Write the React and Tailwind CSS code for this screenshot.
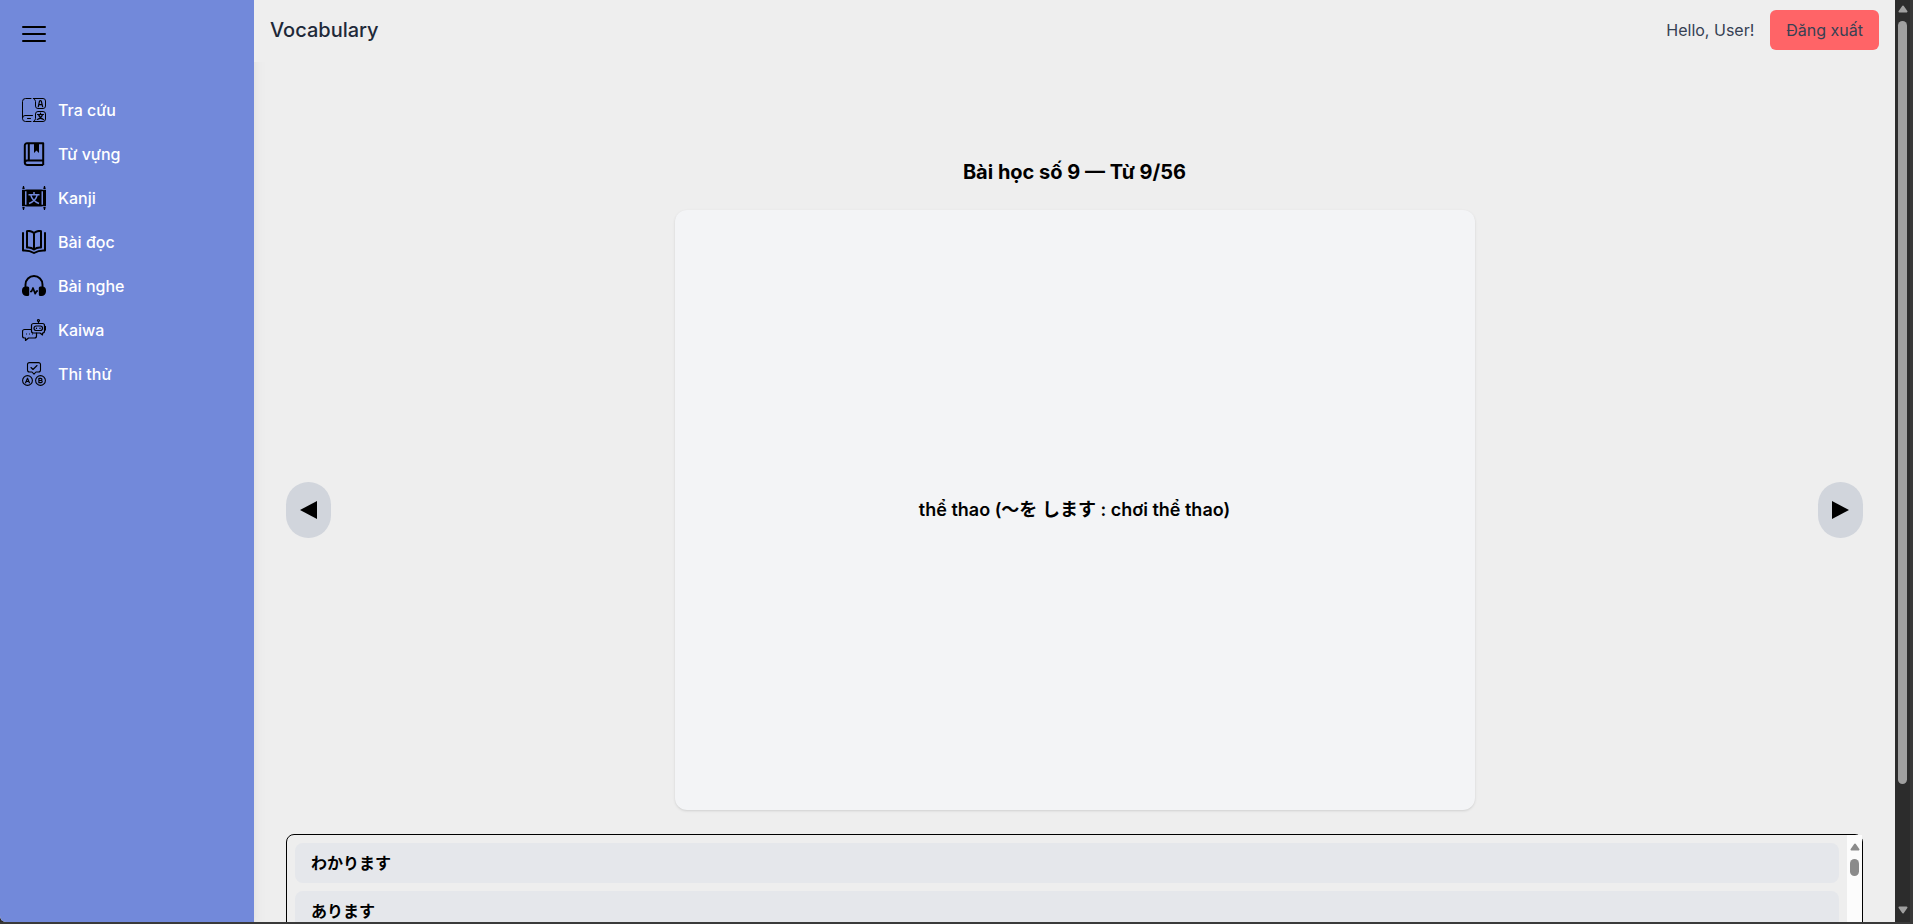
import React from "react";

const LookupIcon = () => (
  <svg viewBox="0 0 24 24" className="size-6 shrink-0" fill="none" stroke="black" strokeWidth="1" strokeLinecap="round" strokeLinejoin="round" aria-hidden="true">
    <path d="M9 .5H3.500a3 3 0 0 0-3 3v17a3 3 0 0 0 3 3H9M.5 20a2.500 2.500 0 0 1 2.500-2.500H10.500M5.500 20.500H8.500" />
    <path d="M11.500.5H21a2.500 2.500 0 0 1 2.500 2.500v5a2.500 2.500 0 0 1-2.500 2.500h-5a2.500 2.500 0 0 1-2.500-2.500V3.500Q13.500 1.500 11.500.5Z" />
    <path d="M11.500 23.500H21a2.500 2.500 0 0 0 2.500-2.500v-5a2.500 2.500 0 0 0-2.500-2.500h-5a2.500 2.500 0 0 0-2.500 2.500V20.500Q13.500 22.500 11.500 23.500Z" />
    <path d="M16.300 8.700L17.500 3.200Q18.400 1.900 19.300 3.200L20.600 8.700M17 6.700H20" strokeWidth="1.200" />
    <path d="M15.500 16.500H21.500M18.500 15V16.500M16.500 16.500Q17.500 20 21.500 21.500M20.500 16.500Q19.500 20 15.300 21.500" strokeWidth="1.200" />
  </svg>
);

const BookmarkIcon = () => (
  <svg viewBox="0 0 24 24" className="size-6 shrink-0" aria-hidden="true">
    <path d="M21.200 18.500V1.200H5a2.200 2.200 0 0 0-2.200 2.200V20.800A2.200 2.200 0 0 0 5 22.900H21.200M2.800 20.800A2.200 2.200 0 0 1 5 18.600H21.200V22.900M6.800 1.200V18.600" fill="none" stroke="black" strokeWidth="2" strokeLinejoin="round" />
    <path d="M12 1h5v10l-2.500-2.500L12 11Z" fill="black" />
  </svg>
);

const KanjiIcon = () => (
  <svg viewBox="0 0 24 24" className="size-6 shrink-0" aria-hidden="true">
    <path d="M1 0h1l.8 3.200H.2ZM22 0h1l.8 3.200h-2.600ZM0 4h3v16H0ZM21 4h3v16h-3ZM.2 20.800h2.600L2 24H1ZM21.200 20.800h2.600L23 24h-1ZM4.500 3.500h15v17h-15Z" fill="black" />
    <path d="M3 4.500h2M3 19.500h2M19 4.500h2M19 19.500h2" stroke="black" strokeWidth="1.500" />
    <path d="M6.500 8.700h11M12 6v2.700M8.700 8.700Q10 15 17 17.500M15.300 8.700Q14 15 7 17.500" fill="none" stroke="#7289da" strokeWidth="1.500" />
  </svg>
);

const ReadingIcon = () => (
  <svg viewBox="0 0 24 24" className="size-6 shrink-0" fill="none" stroke="black" strokeWidth="2" strokeLinejoin="round" strokeLinecap="round" aria-hidden="true">
    <path d="M12 3Q8.500.2 5 1.200V17.500Q9 17 12 19.500Q15 17 19 17.500V1.200Q15.500.2 12 3ZM12 3V19.500" />
    <path d="M1 3V20.500Q7 20 12 23Q17 20 23 20.500V3" />
  </svg>
);

const ListeningIcon = () => (
  <svg viewBox="0 0 24 24" className="size-6 shrink-0" aria-hidden="true">
    <path d="M3.500 14V10.500a8.500 8.500 0 0 1 17 0V14" fill="none" stroke="black" strokeWidth="1.900" />
    <path d="M4 12.500H5.700A1.500 1.500 0 0 1 7.200 14V20.500A1.500 1.500 0 0 1 5.700 22H4.500A4.500 4.500 0 0 1 0 17.500V16.500a4 4 0 0 1 4-4ZM20 12.500H18.300A1.500 1.500 0 0 0 16.800 14V20.500A1.500 1.500 0 0 0 18.300 22H19.500A4.500 4.500 0 0 0 24 17.500V16.500a4 4 0 0 0-4-4Z" fill="black" />
    <path d="M8 17.500h1.500L11 14l2.200 5.700L14.700 17H16" fill="none" stroke="black" strokeWidth="1.700" strokeLinejoin="round" />
  </svg>
);

const SpeakingIcon = () => (
  <svg viewBox="0 0 24 24" className="size-6 shrink-0" fill="none" stroke="black" strokeWidth="1.200" strokeLinecap="round" strokeLinejoin="round" aria-hidden="true">
    <circle cx="16.500" cy="2.500" r="1" />
    <path d="M16.500 3.500V5.500M11.500 5.500H20.500a2 2 0 0 1 2 2V13a2 2 0 0 1-2 2V17L18 15H11.500a2 2 0 0 1-2-2V7.500a2 2 0 0 1 2-2ZM22.500 8.500h1V12h-1" />
    <rect x="12" y="8" width="8.500" height="4.500" rx="2.200" />
    <path d="M14.500 10v.4M18 10v.4" />
    <path d="M9.500 11.500H2.500a2 2 0 0 0-2 2V18a2 2 0 0 0 2 2H3.500V22.500L6.500 20H12.500a2 2 0 0 0 2-2V15" />
    <path d="M4.500 16h.1M7.500 16h.1M10.500 16h.1" strokeWidth="1" />
  </svg>
);

const ExamIcon = () => (
  <svg viewBox="0 0 24 24" className="size-6 shrink-0" fill="none" stroke="black" strokeWidth="1.100" strokeLinecap="round" strokeLinejoin="round" aria-hidden="true">
    <path d="M7.500.6H16.500a2 2 0 0 1 2 2V8a2 2 0 0 1-2 2H14L12 12.200 10 10H7.500a2 2 0 0 1-2-2V2.600a2 2 0 0 1 2-2Z" />
    <path d="M9 5.500l2 2 4-4" />
    <circle cx="5.500" cy="18.500" r="4.900" />
    <circle cx="18.500" cy="18.500" r="4.900" />
    <path d="M3.600 20.800L5.500 16.200L7.400 20.800M4.400 19.500h2.200" strokeWidth="1.200" />
    <path d="M16.900 16.300h1.900a1.100 1.100 0 0 1 0 2.200H16.900h2.200a1.100 1.100 0 0 1 0 2.200H16.900Z" strokeWidth="1.200" />
  </svg>
);

const Triangle = ({ points, className }) => (
  <svg viewBox="0 0 10 8" className={className} aria-hidden="true">
    <polygon points={points} fill="currentColor" stroke="currentColor" strokeWidth="2" strokeLinejoin="round" />
  </svg>
);
const UP = "5,1.500 8.500,6.500 1.500,6.500";
const DOWN = "5,6.500 8.500,1.500 1.500,1.500";

const menu = [
  { label: "Tra cứu", Icon: LookupIcon },
  { label: "Từ vựng", Icon: BookmarkIcon },
  { label: "Kanji", Icon: KanjiIcon },
  { label: "Bài đọc", Icon: ReadingIcon },
  { label: "Bài nghe", Icon: ListeningIcon },
  { label: "Kaiwa", Icon: SpeakingIcon },
  { label: "Thi thử", Icon: ExamIcon },
];

const words = ["わかります", "あります"];

function Sidebar() {
  return (
    <aside className="z-10 w-[254px] shrink-0 bg-[#7289da] px-3.5 py-3.5 shadow-lg">
      <button type="button" aria-label="Menu" className="block p-2">
        <svg viewBox="0 0 24 24" className="h-6 w-6" fill="none" stroke="black" strokeWidth="2" strokeLinecap="round" aria-hidden="true">
          <path d="M1 5H23M1 12H23M1 19H23" />
        </svg>
      </button>
      <nav className="mt-9">
        <ul className="flex flex-col gap-1">
          {menu.map(({ label, Icon }) => (
            <li key={label}>
              <a href="#" className="flex items-center gap-3 p-2 font-medium text-white">
                <Icon />
                {label}
              </a>
            </li>
          ))}
        </ul>
      </nav>
    </aside>
  );
}

function Header() {
  return (
    <header className="relative z-20 flex items-center justify-between bg-[#eeeeee] px-4 pt-2.5 pb-3">
      <h1 className="text-xl font-medium text-gray-800">Vocabulary</h1>
      <div className="flex items-center gap-4 text-gray-700">
        <span>Hello, User!</span>
        <button type="button" className="rounded-md bg-[#ff6467] px-4 py-2">Đăng xuất</button>
      </div>
    </header>
  );
}

function ArrowButton({ label, points }) {
  return (
    <button type="button" aria-label={label} className="flex h-14 w-[45px] items-center justify-center rounded-full bg-[#d1d5dc]">
      <svg viewBox="0 0 18 20" className="h-5 w-[18px]" aria-hidden="true">
        <polygon points={points} fill="black" />
      </svg>
    </button>
  );
}

export default function App() {
  return (
    <div className="flex h-screen overflow-hidden border-r-3 border-b-2 border-[#3a3a3a] bg-[#2c2c2c] font-['Inter','Noto_Sans_CJK_JP',sans-serif]">
      <div className="flex min-w-0 flex-1 overflow-hidden rounded-bl-md bg-[#eeeeee]">
        <Sidebar />
        <div className="min-w-0 flex-1">
          <Header />
          <main className="px-8 pt-24">
            <h2 className="mb-6 text-center text-xl font-bold text-black">Bài học số 9 — Từ 9/56</h2>
            <div className="flex items-center justify-between">
              <ArrowButton label="Từ trước" points="0,10 17,1 17,19" />
              <div className="flex h-[600px] w-[800px] items-center justify-center rounded-xl bg-gray-100 text-lg font-semibold text-black shadow-sm">
                <p>thể thao (～を します : chơi thể thao)</p>
              </div>
              <ArrowButton label="Từ sau" points="17,10 0,1 0,19" />
            </div>
            <section className="mt-6 flex h-96 rounded-lg border border-black">
              <ul className="flex flex-1 flex-col gap-2 p-2">
                {words.map((word) => (
                  <li key={word} className="rounded-lg bg-gray-200 px-4 py-2 font-bold text-black">
                    {word}
                  </li>
                ))}
              </ul>
              <div className="flex w-[15px] flex-col items-center gap-2 bg-[#fcfcfc] pt-2 text-[#8b8b8b]" aria-hidden="true">
                <Triangle points={UP} className="h-2 w-2.5" />
                <span className="h-[17px] w-[9px] rounded-full bg-[#8b8b8b]" />
              </div>
            </section>
          </main>
        </div>
      </div>
      <div className="flex w-[15px] flex-col items-center gap-2 bg-[#2c2c2c] pt-[5px] pb-2 text-[#9f9f9f]" aria-hidden="true">
        <Triangle points={UP} className="h-2 w-2.5" />
        <div className="flex w-[9px] flex-1 flex-col">
          <span className="h-[87%] rounded-full bg-[#9f9f9f]" />
        </div>
        <Triangle points={DOWN} className="h-2 w-2.5" />
      </div>
    </div>
  );
}
